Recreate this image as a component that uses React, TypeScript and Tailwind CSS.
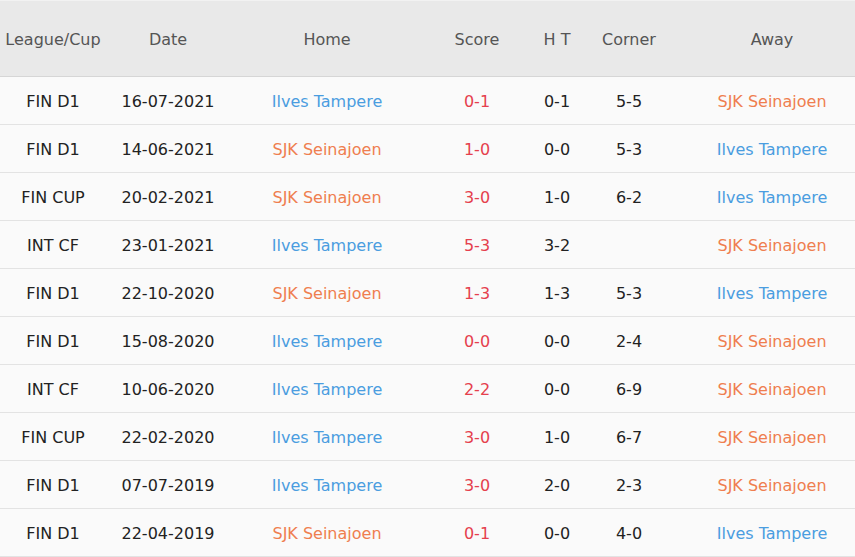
const rows = [
  ["FIN D1", "16-07-2021", "Ilves Tampere", "0-1", "0-1", "5-5", "SJK Seinajoen"],
  ["FIN D1", "14-06-2021", "SJK Seinajoen", "1-0", "0-0", "5-3", "Ilves Tampere"],
  ["FIN CUP", "20-02-2021", "SJK Seinajoen", "3-0", "1-0", "6-2", "Ilves Tampere"],
  ["INT CF", "23-01-2021", "Ilves Tampere", "5-3", "3-2", "", "SJK Seinajoen"],
  ["FIN D1", "22-10-2020", "SJK Seinajoen", "1-3", "1-3", "5-3", "Ilves Tampere"],
  ["FIN D1", "15-08-2020", "Ilves Tampere", "0-0", "0-0", "2-4", "SJK Seinajoen"],
  ["INT CF", "10-06-2020", "Ilves Tampere", "2-2", "0-0", "6-9", "SJK Seinajoen"],
  ["FIN CUP", "22-02-2020", "Ilves Tampere", "3-0", "1-0", "6-7", "SJK Seinajoen"],
  ["FIN D1", "07-07-2019", "Ilves Tampere", "3-0", "2-0", "2-3", "SJK Seinajoen"],
  ["FIN D1", "22-04-2019", "SJK Seinajoen", "0-1", "0-0", "4-0", "Ilves Tampere"],
];

const cols = "grid grid-cols-[106px_124px_194px_106px_54px_90px_196px]";

const teamColor = (name: string) =>
  name.startsWith("Ilves") ? "text-[#4a9de0]" : "text-[#ef7e4f]";

export default function App() {
  return (
    <div className="w-[855px] h-[557px] overflow-hidden bg-[#fafafa] text-[16px] leading-[20px] font-['DejaVu_Sans',sans-serif]">
      <div className="w-[870px]">
        <div className={`${cols} h-[77px] pt-[3px] bg-[#e9e9e9] border-t border-t-[#f2f2f2] border-b border-b-[#d6d6d6] text-[#555] items-center text-center`}>
          <div>League/Cup</div>
          <div>Date</div>
          <div>Home</div>
          <div>Score</div>
          <div>H T</div>
          <div>Corner</div>
          <div>Away</div>
        </div>
        {rows.map((r, i) => (
          <div
            key={i}
            className={`${cols} h-[48px] pt-[3px] border-b border-b-[#e3e3e3] items-center text-center text-[#222]`}
          >
            <div>{r[0]}</div>
            <div>{r[1]}</div>
            <div className={teamColor(r[2])}>{r[2]}</div>
            <div className="text-[#e5404d]">{r[3]}</div>
            <div>{r[4]}</div>
            <div>{r[5]}</div>
            <div className={teamColor(r[6])}>{r[6]}</div>
          </div>
        ))}
      </div>
    </div>
  );
}
